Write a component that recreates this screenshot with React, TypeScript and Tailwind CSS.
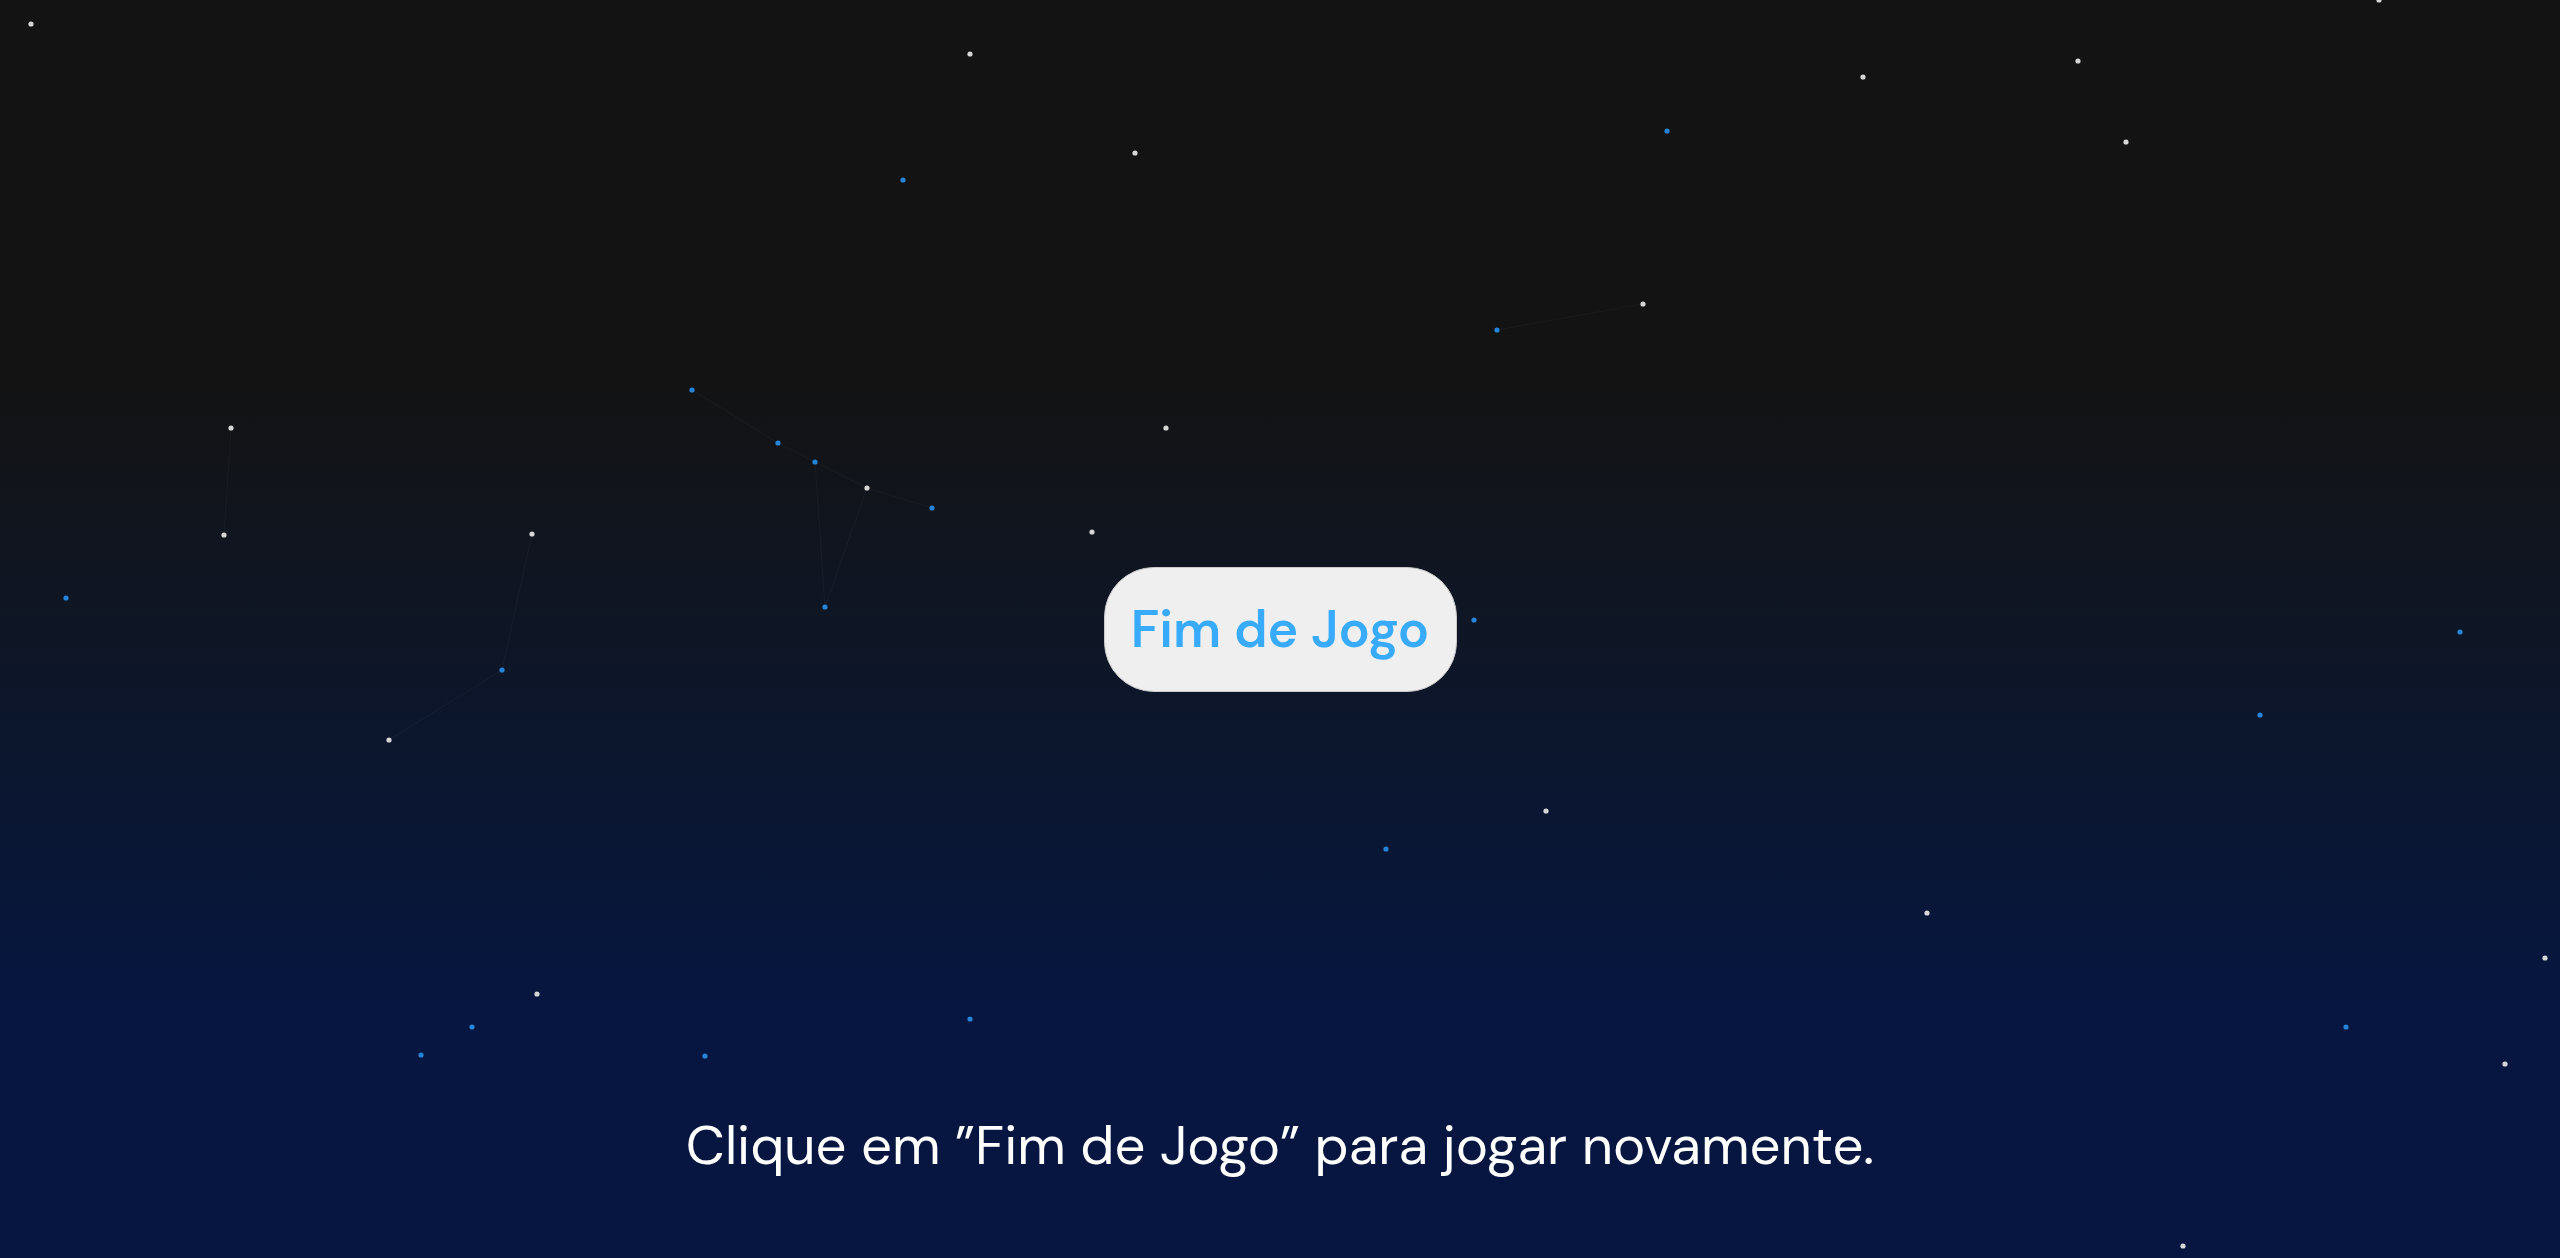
const stars: [number, number, "w" | "b"][] = [
  [31, 24, "w"], [970, 54, "w"], [1135, 153, "w"], [903, 180, "b"], [1863, 77, "w"],
  [2078, 61, "w"], [1667, 131, "b"], [2126, 142, "w"], [2379, 0, "w"], [1497, 330, "b"],
  [1643, 304, "w"], [231, 428, "w"], [692, 390, "b"], [778, 443, "b"], [815, 462, "b"],
  [867, 488, "w"], [932, 508, "b"], [1166, 428, "w"], [1092, 532, "w"], [224, 535, "w"],
  [532, 534, "w"], [66, 598, "b"], [825, 607, "b"], [1474, 620, "b"], [502, 670, "b"],
  [389, 740, "w"], [2460, 632, "b"], [2260, 715, "b"], [1546, 811, "w"], [1386, 849, "b"],
  [1927, 913, "w"], [2545, 958, "w"], [537, 994, "w"], [472, 1027, "b"], [421, 1055, "b"],
  [705, 1056, "b"], [970, 1019, "b"], [2346, 1027, "b"], [2505, 1064, "w"], [2183, 1246, "w"],
];

// faint constellation lines
const lines: [number, number, number, number][] = [
  [231, 428, 224, 535],
  [532, 534, 502, 670],
  [502, 670, 389, 740],
  [692, 390, 778, 443],
  [778, 443, 815, 462],
  [815, 462, 867, 488],
  [867, 488, 932, 508],
  [815, 462, 825, 607],
  [867, 488, 825, 607],
  [1497, 330, 1643, 304],
];

function StarField() {
  return (
    <svg className="absolute inset-0 h-full w-full" viewBox="0 0 2560 1258" preserveAspectRatio="none">
      {lines.map(([x1, y1, x2, y2], i) => (
        <line key={i} x1={x1} y1={y1} x2={x2} y2={y2} stroke="#ffffff" strokeOpacity={0.03} strokeWidth={1.2} />
      ))}
      {stars.map(([x, y, c], i) => (
        <circle key={i} cx={x} cy={y} r={2.6} fill={c === "w" ? "#d6d6d6" : "#2684d8"} />
      ))}
    </svg>
  );
}

export default function App() {
  return (
    <main className="relative h-screen w-full overflow-hidden bg-gradient-to-b from-[#131313] from-30% to-[#061640] to-80% font-['DM_Sans','Inter',sans-serif]">
      <StarField />
      <div className="relative grid h-full grid-rows-[1fr_auto_1fr] justify-items-center">
        <div />
        <button className="flex h-[125px] w-[353px] items-center justify-center rounded-[50px] border border-[#c9c9c9] bg-[#efefef] text-[52px] font-semibold text-[#38abff]">
          Fim de Jogo
        </button>
        <div className="flex items-end pb-[76px]">
          <p className="text-[54.5px] font-normal leading-[72px] text-white">
            Clique em ”Fim de Jogo” para jogar novamente.
          </p>
        </div>
      </div>
    </main>
  );
}
